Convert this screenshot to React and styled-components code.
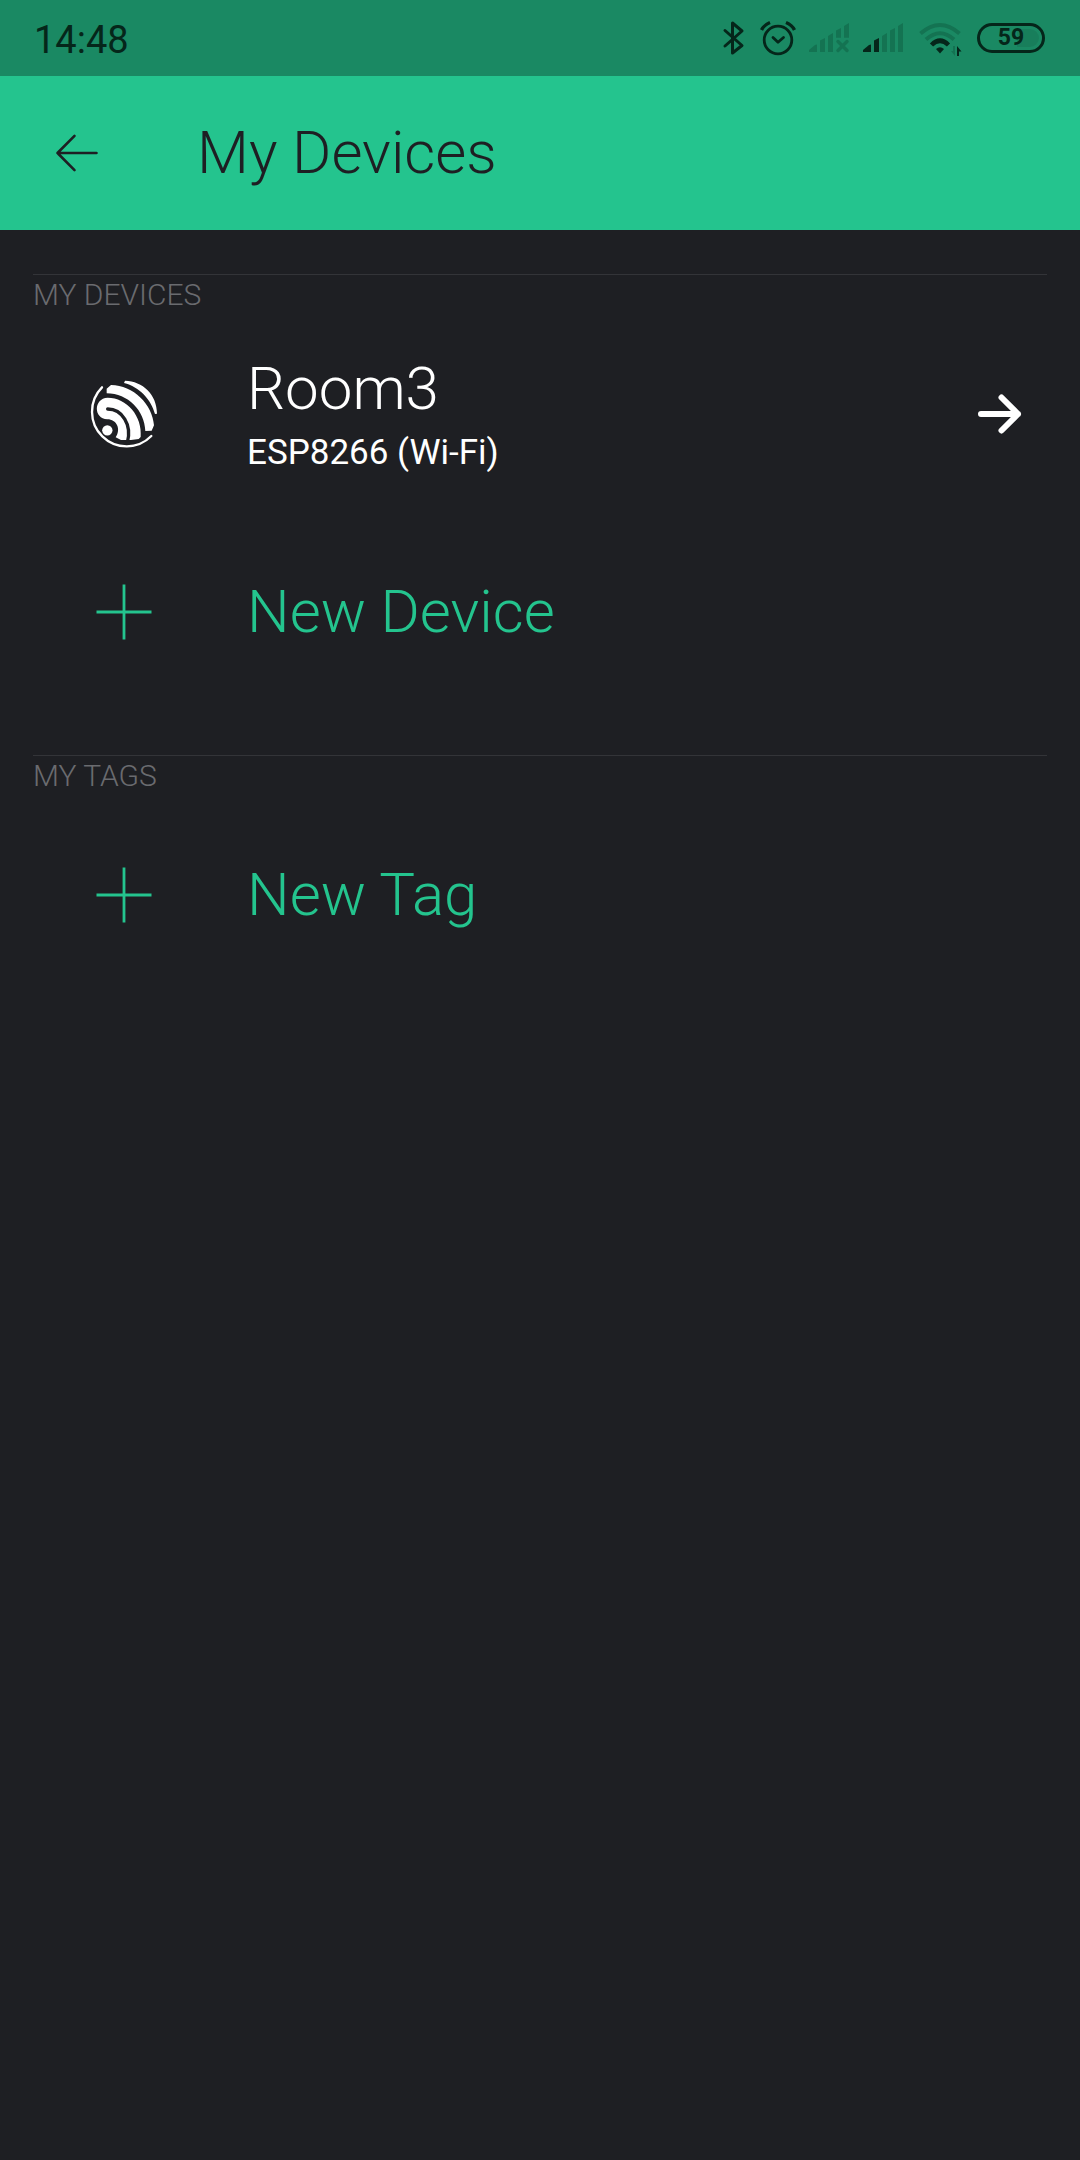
import React from "react";
import styled, { createGlobalStyle } from "styled-components";

const green = "#24c48e";
const ink = "#1e1f23";
const statusInk = "#05261a";

const GlobalStyle = createGlobalStyle`
  *, *::before, *::after { box-sizing: border-box; }
  body {
    margin: 0;
    background: ${ink};
    font-family: Roboto, "Liberation Sans", sans-serif;
  }
  button {
    margin: 0;
    padding: 0;
    border: 0;
    background: none;
    font: inherit;
    color: inherit;
    text-align: left;
    cursor: pointer;
  }
  svg { display: block; flex: none; }
`;

const Screen = styled.div`
  min-height: 100vh;
  display: flex;
  flex-direction: column;
  background: ${ink};
  color: #fff;
`;

const StatusBar = styled.div`
  display: flex;
  align-items: center;
  justify-content: space-between;
  height: 76px;
  padding: 0 35px 0 34px;
  background: #1a8963;
  color: ${statusInk};
`;

const Clock = styled.time`
  font-size: 38px;
  line-height: 44px;
  padding-top: 4px;
`;

const StatusIcons = styled.div`
  display: flex;
  align-items: center;
  gap: 12px;
`;

const Battery = styled.div`
  display: flex;
  align-items: center;
  justify-content: center;
  width: 68px;
  height: 30px;
  border: 3px solid ${statusInk};
  border-radius: 15px;
  padding: 3px;
`;

const BatteryLevel = styled.div`
  flex: 1;
  height: 18px;
  border-radius: 9px;
  background: linear-gradient(90deg, transparent 60%, #187e5b 60%);
  font-size: 23px;
  font-weight: 700;
  line-height: 18px;
  text-align: center;
`;

const Header = styled.header`
  display: flex;
  align-items: center;
  height: 154px;
  padding: 0 34px;
  gap: 77px;
  background: ${green};
  color: ${ink};
`;

const BackButton = styled.button`
  display: flex;
  align-items: center;
  justify-content: center;
  width: 86px;
  height: 86px;
`;

const Title = styled.h1`
  margin: 0;
  font-size: 60px;
  font-weight: 350;
  line-height: 72px;
`;

const Content = styled.main`
  display: flex;
  flex-direction: column;
  gap: 44px;
  padding: 44px 33px;
`;

const Section = styled.section`
  display: flex;
  flex-direction: column;
  border-top: 1px solid #333438;
`;

const SectionTitle = styled.h2`
  margin: 0;
  height: 40px;
  font-size: 30px;
  font-weight: 300;
  line-height: 40px;
  color: #6a6b6f;
`;

const Row = styled.button`
  display: flex;
  align-items: center;
  width: 100%;
  height: 198px;
  padding-right: 24px;
  color: ${(p) => (p.$accent ? green : "#fff")};
`;

const IconCell = styled.span`
  display: flex;
  justify-content: center;
  flex: none;
  width: 182px;
  margin-right: 32px;
`;

const RowText = styled.span`
  display: flex;
  flex-direction: column;
  flex: 1;
  gap: 6px;
  min-width: 0;
`;

const RowTitle = styled.span`
  font-size: 60px;
  font-weight: 350;
  line-height: 72px;
`;

const RowDetail = styled.span`
  font-size: 35px;
  line-height: 44px;
`;

function Bluetooth() {
  return (
    <svg width="26" height="36" viewBox="0 0 26 36" fill="none" stroke={statusInk} strokeWidth="3" strokeLinejoin="round" strokeLinecap="round">
      <path d="M3 10.500 L20 25.500 L10.500 33 V3 L20 11 L3 26" />
    </svg>
  );
}

function Alarm() {
  return (
    <svg width="36" height="36" viewBox="0 0 36 36" fill="none" stroke={statusInk} strokeWidth="2.800">
      <circle cx="18" cy="20" r="13.800" />
      <path d="M13 17.500 L18 22.300 L23.500 17.500" strokeLinecap="round" strokeLinejoin="round" />
      <path d="M1.500 10 Q4 5 10 2.500 M34.500 10 Q32 5 26 2.500" strokeWidth="3.400" />
    </svg>
  );
}

function Signal({ level, off }) {
  const bars = [
    "M1 32 V30 L7 25 L9 24.500 V32 Z",
    "M12 32 V20.500 L17 18 V32 Z",
    "M20 32 V16 L25 13 V32 Z",
    off ? "M28 17.700 V10.500 L33 8 V17.700 Z" : "M28 32 V10.500 L33 8 V32 Z",
    off ? "M36 17.700 V6 L41 3 V17.700 Z" : "M36 32 V6 L41 3 V32 Z",
  ];
  return (
    <svg width="42" height="36" viewBox="0 0 42 36">
      {bars.map((d, i) => (
        <path key={d} d={d} fill={i < level ? statusInk : "#147352"} />
      ))}
      {off && <path d="M30 21.500 L39 30.500 M39 21.500 L30 30.500" stroke="#147352" strokeWidth="3.400" strokeLinecap="round" />}
    </svg>
  );
}

function Wifi() {
  return (
    <svg width="49" height="36" viewBox="0 0 49 36" fill="none" strokeWidth="4">
      <path d="M4.500 13.500 Q24 -3.500 43.500 13.500" stroke="#147352" />
      <path d="M10 19.500 Q24 7 38 19.500" stroke="#147352" />
      <path d="M15.500 25 Q24 16.500 32.500 25" stroke={statusInk} strokeWidth="4.500" />
      <path d="M20 29 Q24 25.500 28 29 L24 33.500 Z" fill={statusInk} />
      <path d="M39 26 V36 L35 31 H37 V26 Z" fill="#147352" />
      <path d="M41 36 V26 L45.500 31.500 H43 V36 Z" fill={statusInk} />
    </svg>
  );
}

function BackArrow() {
  return (
    <svg width="44" height="40" viewBox="0 0 44 40" fill="none" stroke={ink} strokeWidth="2.600" strokeLinecap="round" strokeLinejoin="round">
      <path d="M41.500 20 H2.500 M19.500 2.800 L2.500 20 L19.500 37.200" />
    </svg>
  );
}

function ForwardArrow() {
  return (
    <svg width="46" height="42" viewBox="0 0 46 42" fill="none" stroke="#fff" strokeWidth="6" strokeLinecap="round" strokeLinejoin="round">
      <path d="M4 21 H41 M24.500 4.500 L41 21 L24.500 37.500" />
    </svg>
  );
}

function Plus() {
  return (
    <svg width="58" height="58" viewBox="0 0 58 58" stroke={green} strokeWidth="2.800">
      <path d="M29 1.500 V56.500 M1.500 29 H56.500" />
    </svg>
  );
}

function EspressifLogo() {
  return (
    <svg width="96" height="96" viewBox="0 0 288 288" fill="#fff">
      <path d="M78 64 A101 101 0 1 0 226 210" fill="none" stroke="#fff" strokeWidth="7" strokeLinecap="round" />
      <path d="M147 44 C200 45 243 86 243 143 L237 144 C226 102 190 62 144 51 Z" />
      <path d="M92 82 V68 L105 57 C172 57 230 116 234 178 L227 194 L208 195 C206 134 156 82 92 82 Z" />
      <path d="M95 95 C152 95 200 150 194 213 L188 219 L165 222 H135 L119 214 C136 190 122 160 94 160 C52 158 52 97 95 95 Z" />
      <path d="M95 129 C138 129 169 176 154 230" fill="none" stroke={ink} strokeWidth="10" strokeLinecap="round" />
      <circle cx="94" cy="193" r="15.500" />
    </svg>
  );
}

export default function App() {
  return (
    <Screen>
      <GlobalStyle />
      <StatusBar>
        <Clock>14:48</Clock>
        <StatusIcons>
          <Bluetooth />
          <Alarm />
          <Signal level={0} off />
          <Signal level={2} />
          <Wifi />
          <Battery>
            <BatteryLevel>59</BatteryLevel>
          </Battery>
        </StatusIcons>
      </StatusBar>
      <Header>
        <BackButton aria-label="Back">
          <BackArrow />
        </BackButton>
        <Title>My Devices</Title>
      </Header>
      <Content>
        <Section>
          <SectionTitle>MY DEVICES</SectionTitle>
          <Row>
            <IconCell>
              <EspressifLogo />
            </IconCell>
            <RowText>
              <RowTitle>Room3</RowTitle>
              <RowDetail>ESP8266 (Wi-Fi)</RowDetail>
            </RowText>
            <ForwardArrow />
          </Row>
          <Row $accent>
            <IconCell>
              <Plus />
            </IconCell>
            <RowText>
              <RowTitle>New Device</RowTitle>
            </RowText>
          </Row>
        </Section>
        <Section>
          <SectionTitle>MY TAGS</SectionTitle>
          <Row $accent>
            <IconCell>
              <Plus />
            </IconCell>
            <RowText>
              <RowTitle>New Tag</RowTitle>
            </RowText>
          </Row>
        </Section>
      </Content>
    </Screen>
  );
}
